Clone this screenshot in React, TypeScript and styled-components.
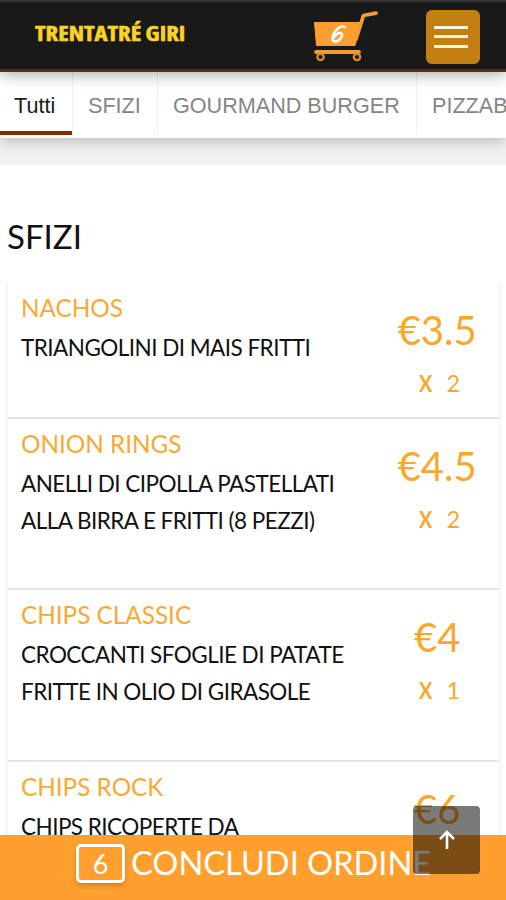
import React from 'react';
import styled, { createGlobalStyle } from 'styled-components';

const Global = createGlobalStyle`
  *, *::before, *::after { box-sizing: border-box; }
  html, body { margin: 0; padding: 0; background: #fff; }
  body { overflow: hidden; }
`;

const Page = styled.div`
  position: relative;
  width: 506px;
  height: 900px;
  overflow: hidden;
  display: flex;
  flex-direction: column;
  background: #fff;
  color: #111;
  font-family: Lato, sans-serif;
`;

const Header = styled.header`
  flex: none;
  height: 72px;
  position: relative;
  z-index: 2;
  display: flex;
  align-items: center;
  padding: 0 26px 0 35px;
  background: #191919;
  border-top: 2px solid #383838;
  border-bottom: 3px solid #5c2c0c;
  box-shadow: 0 3px 14px rgba(0, 0, 0, 0.32);
`;

const Brand = styled.div`
  flex: 1;
  margin-bottom: 5px;
  font: 700 21.5px/24px 'Open Sans', sans-serif;
  font-stretch: condensed;
  color: #fad324;
  -webkit-text-stroke: 0.6px #fad324;
  white-space: nowrap;
  span {
    display: inline-block;
    transform: scaleX(1.145);
    transform-origin: left;
  }
`;

const CartIcon = styled.svg`
  width: 66px;
  height: 52px;
  margin-right: 47px;
`;

const MenuButton = styled.button`
  width: 54px;
  height: 54px;
  margin-top: 2px;
  padding: 0 12px 0 8px;
  border: 0;
  border-radius: 6px;
  background: #c47f12;
  display: flex;
  flex-direction: column;
  justify-content: center;
  gap: 6.5px;
`;

const MenuLine = styled.span`
  height: 3px;
  background: #fff3dc;
`;

const Tabs = styled.nav`
  flex: none;
  height: 66px;
  display: flex;
  position: relative;
  z-index: 1;
  background: #fff;
  box-shadow: 0 3px 14px rgba(0, 0, 0, 0.24);
`;

const Tab = styled.a<{ $active?: boolean; $width: number }>`
  flex: none;
  width: ${(p) => p.$width}px;
  height: 63px;
  padding: 1px 0 0 ${(p) => (p.$active ? 14 : 15)}px;
  box-shadow: inset -1px 0 #f1f1f1${(p) => (p.$active ? ', inset 0 -4px #802d08' : '')};
  color: ${(p) => (p.$active ? '#1a1a1a' : '#858585')};
  font: 21.6px/65px 'Liberation Sans', Arial, sans-serif;
  white-space: nowrap;
`;

const Band = styled.div`
  flex: none;
  height: 27px;
  background: #f1f1f1;
`;

const Title = styled.h1`
  flex: none;
  margin: 51px 0 26px 7px;
  font-size: 33px;
  line-height: 41px;
  font-weight: 400;
`;

const List = styled.ul`
  flex: none;
  width: 495px;
  margin: 0 0 0 6px;
  padding: 0;
  list-style: none;
  border: solid #f5f5f5;
  border-width: 0 2px;
`;

const Row = styled.li<{ $height: number }>`
  height: ${(p) => p.$height}px;
  display: flex;
  border-bottom: 2px solid #e6e6e6;
`;

const Info = styled.div`
  width: 362px;
  padding: 8px 0 0 13px;
`;

const Name = styled.h2`
  margin: 0;
  font-size: 24.3px;
  line-height: 34px;
  font-weight: 400;
  color: #faa834;
`;

const Desc = styled.p`
  margin: 5px 0 0;
  font-size: 22.5px;
  line-height: 36.5px;
  letter-spacing: -0.54px;
  white-space: pre-line;
`;

const Side = styled.div`
  width: 134px;
  padding-left: 9px;
  display: flex;
  flex-direction: column;
  align-items: center;
  color: #faa72c;
`;

const Price = styled.div`
  margin-top: 22px;
  font-size: 40px;
  line-height: 50px;
`;

const Quantity = styled.div`
  display: flex;
  align-items: baseline;
  gap: 13px;
  margin: 13px 0 0 4px;
  font-size: 23.5px;
  line-height: 30px;
  b {
    font-weight: 700;
    font-size: 23px;
    transform: scaleX(0.86);
  }
`;

const OrderBar = styled.button`
  position: absolute;
  left: 0;
  bottom: 0;
  width: 100%;
  height: 65px;
  padding: 9px 0 0 76px;
  border: 0;
  display: flex;
  align-items: flex-start;
  gap: 6px;
  background: #ffa02e;
  color: #fff;
  font: 32.6px/37px Lato, sans-serif;
  white-space: nowrap;
`;

const Count = styled.span`
  width: 49px;
  height: 39px;
  border: 3px solid #fff;
  border-radius: 5px;
  box-shadow: 0 3px 5px rgba(120, 60, 0, 0.3);
  font-size: 27px;
  line-height: 33px;
  text-align: center;
`;

const TopButton = styled.button`
  position: absolute;
  left: 413px;
  top: 806px;
  width: 67px;
  height: 68px;
  padding: 0;
  border: 0;
  border-radius: 4px;
  background: rgba(0, 0, 0, 0.52);
  display: flex;
  align-items: center;
  justify-content: center;
`;

const tabs = [
  { label: 'Tutti', width: 73 },
  { label: 'SFIZI', width: 85 },
  { label: 'GOURMAND BURGER', width: 259 },
  { label: 'PIZZABURGER', width: 190 },
];

const items = [
  { name: 'NACHOS', desc: 'TRIANGOLINI DI MAIS FRITTI', price: '€3.5', qty: 2, height: 136 },
  { name: 'ONION RINGS', desc: 'ANELLI DI CIPOLLA PASTELLATI\nALLA BIRRA E FRITTI (8 PEZZI)', price: '€4.5', qty: 2, height: 171 },
  { name: 'CHIPS CLASSIC', desc: 'CROCCANTI SFOGLIE DI PATATE\nFRITTE IN OLIO DI GIRASOLE', price: '€4', qty: 1, height: 172 },
  { name: 'CHIPS ROCK', desc: 'CHIPS RICOPERTE DA', price: '€6', qty: 1, height: 171 },
];

function Cart() {
  return (
    <CartIcon viewBox="313 9 66 52">
      <path d="M314.5 21.5h47l-6.500 23h-38.500z" fill="#ff9f30" stroke="#ff9f30" strokeLinejoin="round" />
      <path d="M356 38l7.500-23.500 12.500-2.300" fill="none" stroke="#f59c35" strokeWidth="3.8" strokeLinejoin="round" strokeLinecap="round" />
      <path d="M316 51h43" stroke="#f29a32" strokeWidth="3.800" strokeLinecap="round" />
      <g fill="#191919" stroke="#d98b32" strokeWidth="2.3">
        <circle cx="320.5" cy="56" r="3.2" />
        <circle cx="357" cy="56" r="3.2" />
      </g>
      <path d="M344.500 26c-4-3-12.500 6-12 12 .8 5 8 2 9.500-3.500.6-4-5-3-7.500 1.500" fill="none" stroke="#fff" strokeWidth="2.6" strokeLinecap="round" />
    </CartIcon>
  );
}

export default function App() {
  return (
    <Page>
      <Global />
      <Header>
        <Brand><span>TRENTATRÉ GIRI</span></Brand>
        <Cart />
        <MenuButton aria-label="Menu">
          <MenuLine />
          <MenuLine />
          <MenuLine />
        </MenuButton>
      </Header>
      <Tabs>
        {tabs.map((t, i) => (
          <Tab key={t.label} $active={i === 0} $width={t.width}>{t.label}</Tab>
        ))}
      </Tabs>
      <Band />
      <Title>SFIZI</Title>
      <List>
        {items.map((it) => (
          <Row key={it.name} $height={it.height}>
            <Info>
              <Name>{it.name}</Name>
              <Desc>{it.desc}</Desc>
            </Info>
            <Side>
              <Price>{it.price}</Price>
              <Quantity><b>X</b><span>{it.qty}</span></Quantity>
            </Side>
          </Row>
        ))}
      </List>
      <OrderBar>
        <Count>6</Count>
        <span>CONCLUDI ORDINE</span>
      </OrderBar>
      <TopButton aria-label="Torna su">
        <svg width="18" height="22" viewBox="0 0 18 22" fill="none" stroke="#fff" strokeWidth="2.6">
          <path d="M9 20V3M2 10l7-7 7 7" />
        </svg>
      </TopButton>
    </Page>
  );
}
